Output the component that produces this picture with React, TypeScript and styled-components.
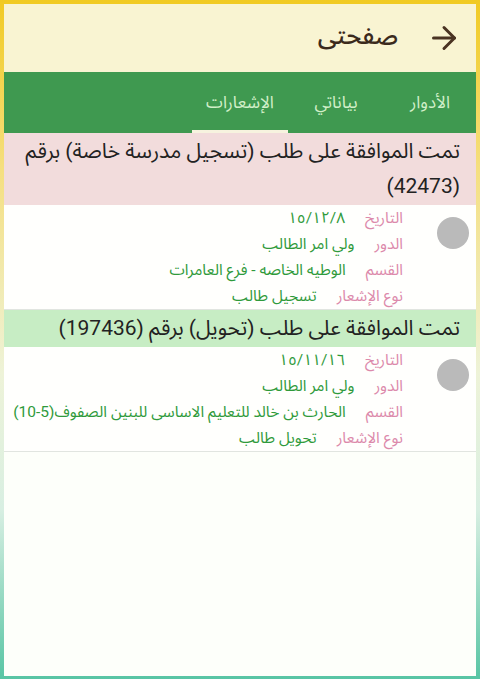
import React from 'react';
import styled, { createGlobalStyle } from 'styled-components';
import { ArrowRight } from 'lucide-react';

const GlobalStyle = createGlobalStyle`
  html, body {
    margin: 0;
    padding: 0;
    background: #fdfffa;
  }
  * {
    box-sizing: border-box;
  }
`;

const font = `Roboto, "Noto Sans Arabic", "DejaVu Sans", sans-serif`;

interface NoticeRow {
  label: string;
  value: React.ReactNode;
}

interface Notice {
  id: number;
  title: string;
  tone: 'pink' | 'green';
  rows: NoticeRow[];
}

const notices: Notice[] = [
  {
    id: 42473,
    title: 'تمت الموافقة على طلب (تسجيل مدرسة خاصة) برقم (42473)',
    tone: 'pink',
    rows: [
      { label: 'التاريخ', value: '١٥/١٢/٨' },
      { label: 'الدور', value: 'ولي امر الطالب' },
      { label: 'القسم', value: 'الوطيه الخاصه - فرع العامرات' },
      { label: 'نوع الإشعار', value: 'تسجيل طالب' },
    ],
  },
  {
    id: 197436,
    title: 'تمت الموافقة على طلب (تحويل) برقم (197436)',
    tone: 'green',
    rows: [
      { label: 'التاريخ', value: '١٥/١١/١٦' },
      { label: 'الدور', value: 'ولي امر الطالب' },
      {
        label: 'القسم',
        value: (
          <>
            الحارث بن خالد للتعليم الاساسى للبنين الصفوف
            <bdi dir="ltr">(10-5)</bdi>
          </>
        ),
      },
      { label: 'نوع الإشعار', value: 'تحويل طالب' },
    ],
  },
];

const tabs = [
  { name: 'الأدوار', width: 92 },
  { name: 'بياناتي', width: 96 },
  { name: 'الإشعارات', width: 96 },
];

function NoticeCard({ notice }: { notice: Notice }) {
  return (
    <Card>
      <CardTitle $tone={notice.tone}>{notice.title}</CardTitle>
      <CardBody>
        <Dot />
        <Rows>
          {notice.rows.map((row) => (
            <Row key={row.label}>
              <Label>{row.label}</Label>
              <Value>{row.value}</Value>
            </Row>
          ))}
        </Rows>
      </CardBody>
    </Card>
  );
}

export default function App() {
  return (
    <Frame>
      <GlobalStyle />
      <Screen>
        <TopBar>
          <BackButton type="button">
            <ArrowRight size={36} strokeWidth={2} color="#4a3322" />
          </BackButton>
          <PageTitle>صفحتى</PageTitle>
        </TopBar>
        <TabBar>
          {tabs.map((tab, i) => (
            <Tab key={tab.name} $width={tab.width} $active={i === 2}>
              {tab.name}
            </Tab>
          ))}
        </TabBar>
        <List>
          {notices.map((n) => (
            <NoticeCard key={n.id} notice={n} />
          ))}
        </List>
      </Screen>
    </Frame>
  );
}

const Frame = styled.div`
  width: 480px;
  height: 679px;
  padding: 4px 4px 3px 4px;
  background: linear-gradient(
    to bottom,
    #f1ca22 0%,
    #f5df80 25%,
    #eef3d8 55%,
    #d8efe2 75%,
    #58c5a4 100%
  );
`;

const Screen = styled.div`
  height: 100%;
  direction: rtl;
  display: flex;
  flex-direction: column;
  background: #fdfffa;
  font-family: ${font};
`;

const TopBar = styled.div`
  height: 68px;
  display: flex;
  align-items: center;
  gap: 28px;
  padding-right: 14px;
  background: #f9f4d2;
`;

const BackButton = styled.button`
  display: flex;
  align-items: center;
  padding: 0;
  border: none;
  background: none;
`;

const PageTitle = styled.div`
  font-size: 25px;
  font-weight: 500;
  color: #3b2a1c;
  padding-bottom: 4px;
`;

const TabBar = styled.div`
  height: 61px;
  display: flex;
  background: #3f9950;
`;

const Tab = styled.div<{ $active?: boolean; $width: number }>`
  width: ${(p) => p.$width}px;
  display: flex;
  align-items: center;
  justify-content: center;
  font-size: 17px;
  color: #d2efc9;
  box-shadow: ${(p) => (p.$active ? 'inset 0 -3px 0 #f7f3df' : 'none')};
`;

const List = styled.div`
  display: flex;
  flex-direction: column;
`;

const Card = styled.div`
  border-bottom: 1px solid #e1e5e0;
`;

const CardTitle = styled.div<{ $tone: 'pink' | 'green' }>`
  padding: 1px 16px;
  font-size: 21px;
  line-height: 35px;
  color: #222;
  background: ${(p) => (p.$tone === 'pink' ? '#f2dcdc' : '#c7edc4')};
`;

const CardBody = styled.div`
  display: flex;
  align-items: flex-start;
  gap: 34px;
  padding-right: 7px;
  background: #fffffd;
`;

const Dot = styled.div`
  width: 32px;
  height: 32px;
  margin-top: 12px;
  border-radius: 50%;
  background: #bababa;
  flex-shrink: 0;
`;

const Rows = styled.div`
  display: flex;
  flex-direction: column;
`;

const Row = styled.div`
  display: flex;
  align-items: center;
  gap: 20px;
  height: 26px;
  font-size: 15.5px;
  white-space: nowrap;
`;

const Label = styled.span`
  color: #dc8aab;
`;

const Value = styled.span`
  color: #2f9a3b;
`;
